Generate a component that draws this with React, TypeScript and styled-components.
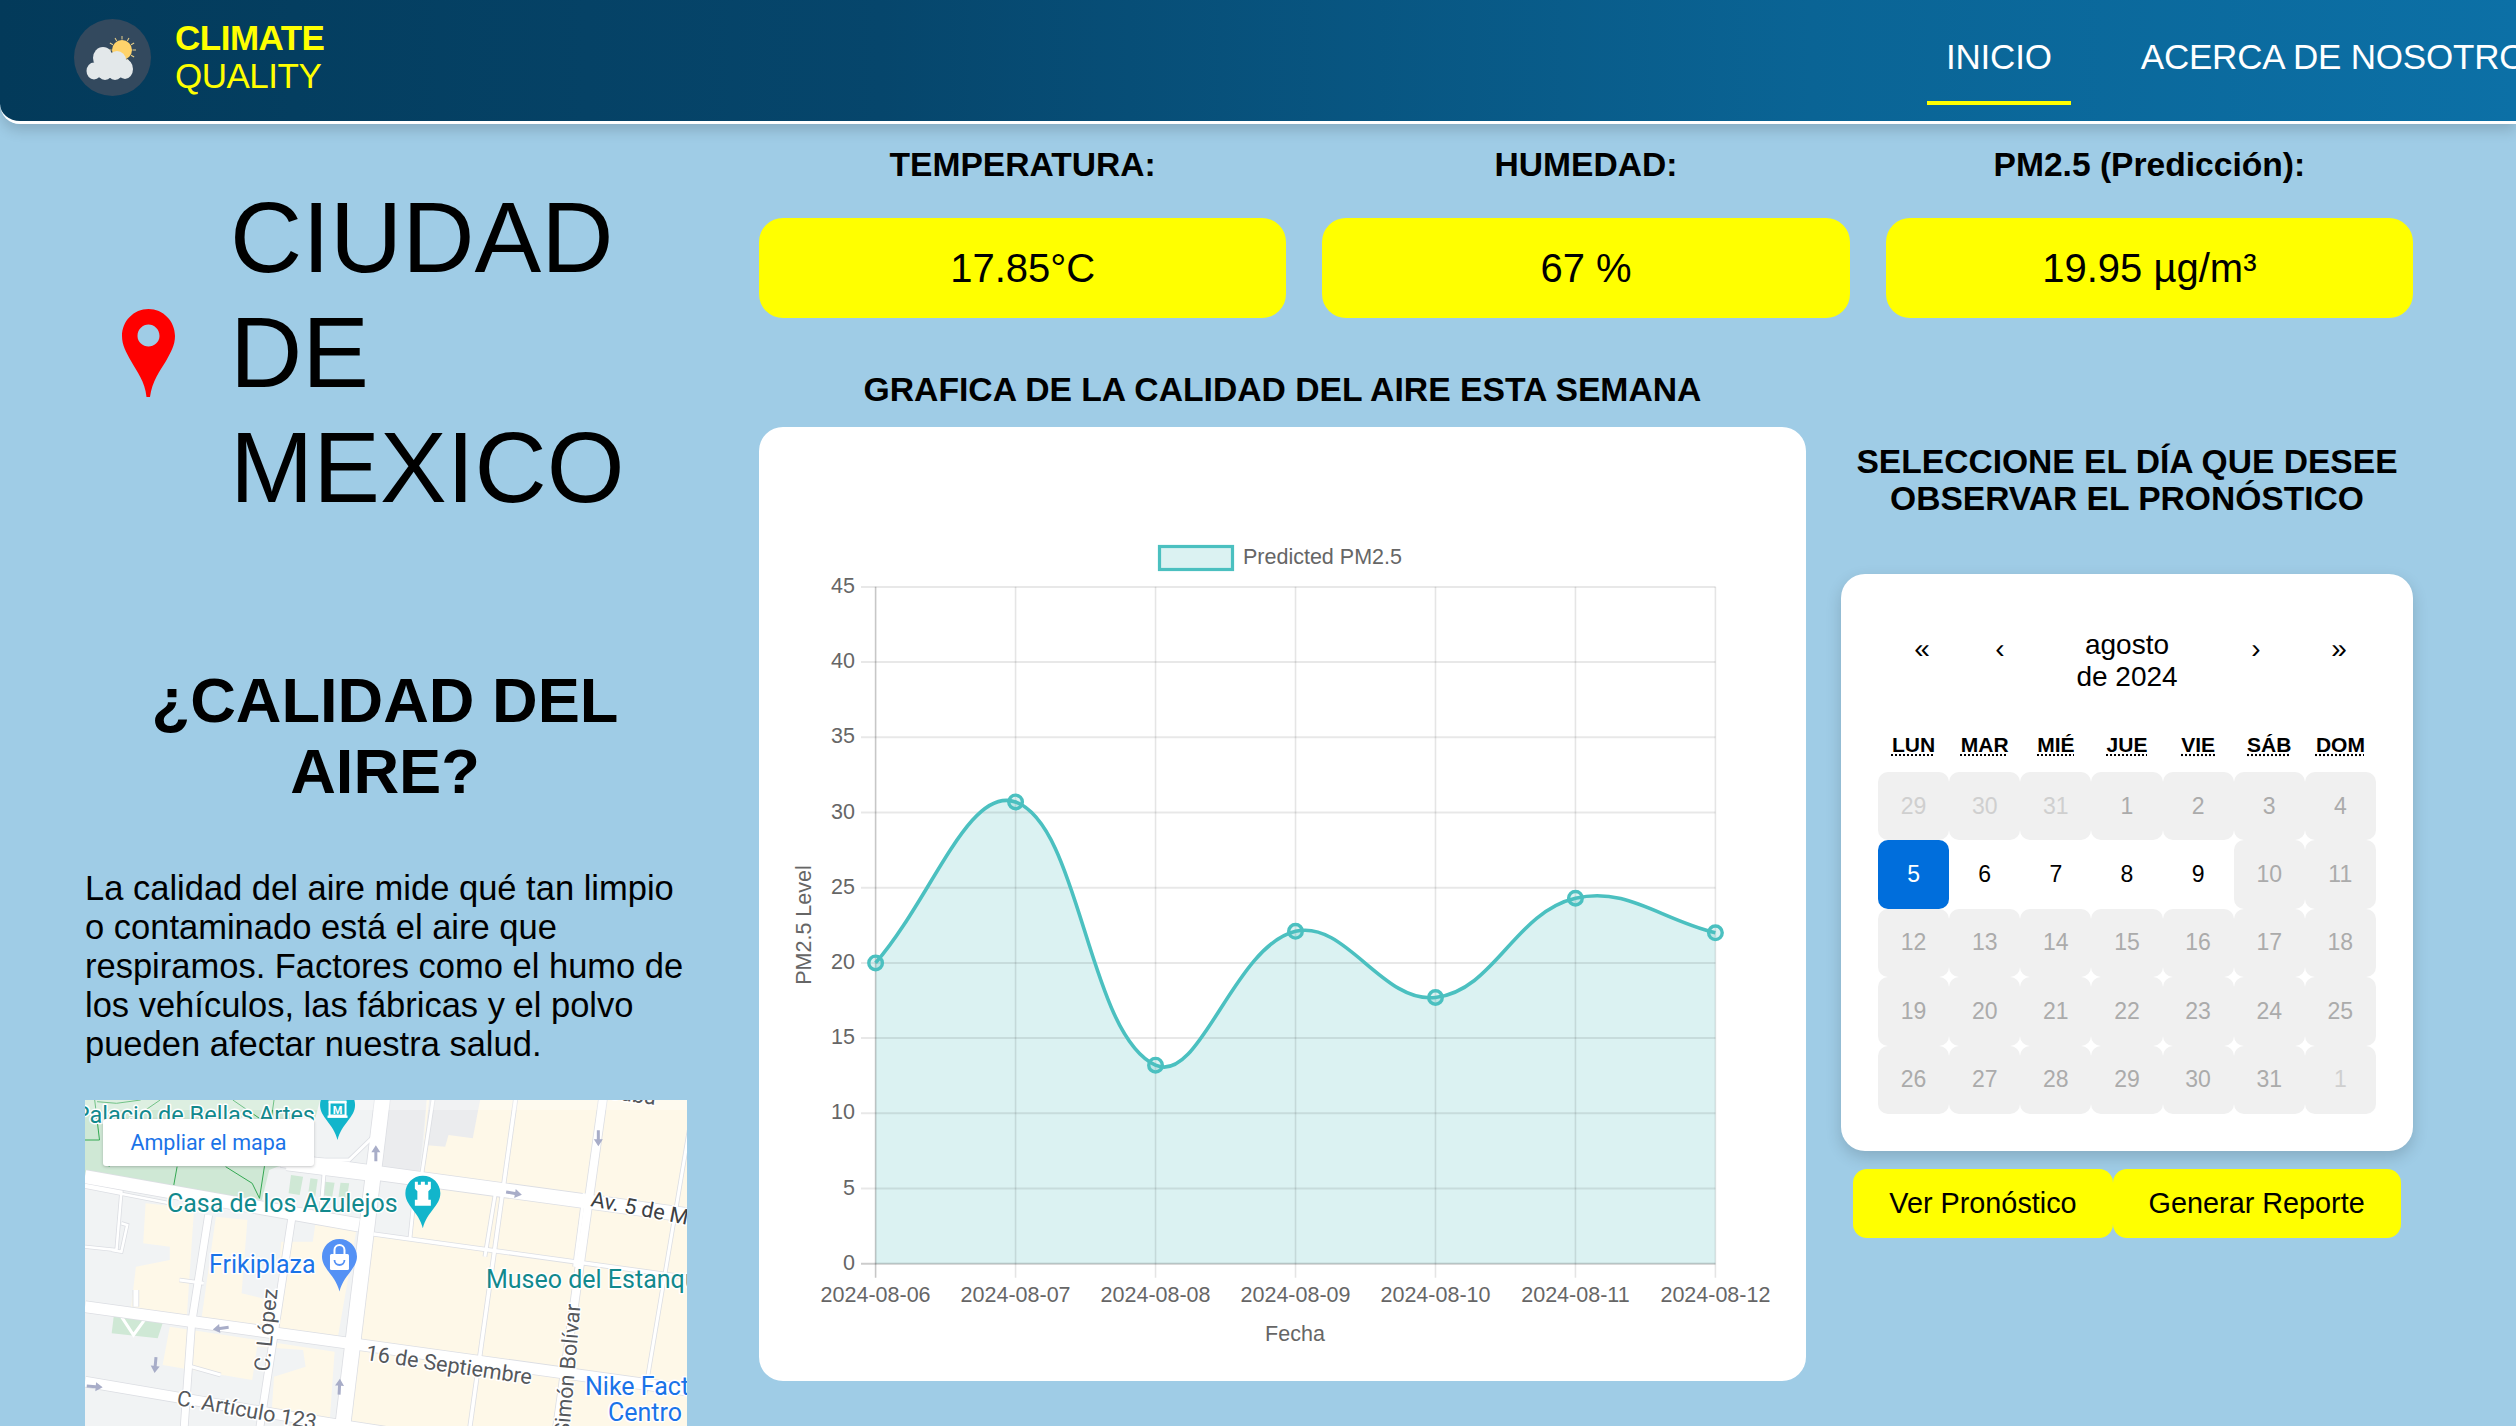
import React from "react";
import styled, { createGlobalStyle } from "styled-components";

const Global = createGlobalStyle`
  html, body { margin: 0; padding: 0; height: 100%; overflow: hidden; background: #9fcce6; }
  body { font-family: "Liberation Sans", Arial, sans-serif; color: #000; }
  #root { height: 100%; }
  * { box-sizing: border-box; }
`;

const Page = styled.div`
  width: 2516px;
  height: 1426px;
  overflow: hidden;
  background: #9fcce6;
`;

const Header = styled.header`
  display: flex;
  align-items: flex-start;
  height: 124px;
  padding-left: 74px;
  background: linear-gradient(90deg, #033a5a 0%, #06466c 35%, #0a6495 72%, #0c70a6 100%);
  border-bottom: 3px solid #fff;
  border-bottom-left-radius: 20px;
  box-shadow: 0 6px 14px rgba(0, 0, 0, 0.16);
  position: relative;
`;

const Brand = styled.div`
  display: flex;
  flex: 0 0 1853px;
  gap: 24px;
  padding-top: 19px;
`;

const LogoDisc = styled.div`
  width: 77px;
  height: 77px;
  border-radius: 50%;
  background: #33495e;
  flex: none;
`;

const BrandText = styled.div`
  color: #ffff00;
  font-size: 35px;
  line-height: 38px;
  letter-spacing: -0.5px;
`;

const BrandStrong = styled.div`
  font-weight: 700;
`;

const Nav = styled.nav`
  display: flex;
  flex: none;
  gap: 51px;
  white-space: nowrap;
`;

const NavLink = styled.a<{ $active?: boolean }>`
  display: block;
  height: 105px;
  padding: 37px 19px 0;
  color: #fff;
  font-size: 35px;
  line-height: 40px;
  letter-spacing: -0.2px;
  border-bottom: 4px solid ${(p) => (p.$active ? "#ffff00" : "transparent")};
`;

const Main = styled.main`
  display: grid;
  grid-template-columns: 759px 1654px;
`;

const LeftCol = styled.section`
  padding: 56px 0 0 85px;
`;

const CityRow = styled.div`
  display: flex;
  align-items: center;
  gap: 55px;
  padding-left: 37px;
`;

const CityName = styled.h1`
  margin: 0;
  width: 420px;
  font-size: 100px;
  font-weight: 400;
  line-height: 115px;
`;

const AirTitle = styled.h2`
  margin: 140px 0 0;
  width: 600px;
  text-align: center;
  font-size: 63.2px;
  line-height: 71px;
  font-weight: 700;
`;

const AirText = styled.p`
  margin: 62px 0 0;
  width: 606px;
  font-size: 34.5px;
  line-height: 39px;
`;

const MapFrame = styled.div`
  position: relative;
  margin-top: 36px;
  width: 602px;
  height: 420px;
  overflow: hidden;
  background: #f1f3f4;
`;

const MapLink = styled.a`
  position: absolute;
  left: 18px;
  top: 19px;
  width: 211px;
  height: 47px;
  display: flex;
  align-items: center;
  justify-content: center;
  background: #fff;
  border-radius: 3px;
  box-shadow: 0 1px 3px rgba(60, 64, 67, 0.3);
  color: #1a73e8;
  font-family: Roboto, sans-serif;
  font-size: 21.5px;
`;

const RightCol = styled.section``;

const Stats = styled.div`
  display: grid;
  grid-template-columns: repeat(3, 1fr);
  column-gap: 36px;
`;

const Stat = styled.div`
  text-align: center;
`;

const StatLabel = styled.div`
  height: 94px;
  padding-top: 21px;
  font-size: 33.6px;
  line-height: 40px;
  font-weight: 700;
`;

const StatValue = styled.div`
  height: 100px;
  display: flex;
  align-items: center;
  justify-content: center;
  background: #ffff00;
  border-radius: 24px;
  font-size: 40px;
`;

const Lower = styled.div`
  display: grid;
  grid-template-columns: 1047px 572px;
  column-gap: 35px;
`;

const ChartCol = styled.div``;

const ChartTitle = styled.h3`
  margin: 50.5px 0 18.5px;
  height: 40px;
  text-align: center;
  font-size: 33.7px;
  line-height: 40px;
  font-weight: 700;
`;

const ChartCard = styled.div`
  height: 954px;
  background: #fff;
  border-radius: 24px;
  overflow: hidden;
`;

const ChartSvg = styled.svg`
  display: block;
  font-family: "Liberation Sans", Arial, sans-serif;
`;

const CalCol = styled.div``;

const CalTitle = styled.h3`
  margin: 125px 0 57px;
  text-align: center;
  font-size: 33.6px;
  line-height: 37px;
  font-weight: 700;
`;

const CalCard = styled.div`
  height: 577px;
  padding: 55px 37px 0;
  background: #fff;
  border-radius: 24px;
  box-shadow: 0 6px 16px rgba(0, 0, 0, 0.16);
`;

const CalNav = styled.div`
  display: grid;
  grid-template-columns: 88px 68px 1fr 72px 94px;
  margin-right: -10px;
  height: 64px;
  align-items: center;
  text-align: center;
  font-size: 28px;
  line-height: 32px;
`;

const CalArrow = styled.span`
  font-size: 28px;
  padding-bottom: 24px;
`;

const WeekHead = styled.div`
  display: grid;
  grid-template-columns: repeat(7, 1fr);
  margin-top: 39px;
  height: 40px;
  text-align: center;
  font-size: 21px;
  line-height: 26px;
  font-weight: 700;
`;

const WeekDay = styled.abbr`
  text-decoration: underline dotted;
  text-underline-offset: 2px;
`;

const Days = styled.div`
  display: grid;
  grid-template-columns: repeat(7, 71.14px);
  grid-auto-rows: 68.4px;
`;

const Day = styled.div<{ $kind: "off" | "faded" | "open" | "sel" }>`
  display: flex;
  align-items: center;
  justify-content: center;
  font-size: 23px;
  border-radius: 10px;
  background: ${(p) => (p.$kind === "sel" ? "#006edc" : p.$kind === "open" ? "#fff" : "#f0f0f0")};
  color: ${(p) => (p.$kind === "sel" ? "#fff" : p.$kind === "open" ? "#000" : p.$kind === "faded" ? "#cfcfcf" : "#ababab")};
`;

const Actions = styled.div`
  display: flex;
  justify-content: center;
  margin-top: 18px;
`;

const Action = styled.button`
  height: 69px;
  padding: 0 36px;
  border: 0;
  border-radius: 14px;
  background: #ffff00;
  color: #000;
  font-family: "Liberation Sans", Arial, sans-serif;
  font-size: 28.8px;
`;

/* ---- chart ---- */
const values = [20, 30.7, 13.2, 22.1, 17.7, 24.3, 22];
const labels = ["2024-08-06", "2024-08-07", "2024-08-08", "2024-08-09", "2024-08-10", "2024-08-11", "2024-08-12"];
const X0 = 875.6;
const XS = 139.97;
const Y0 = 1263.7;
const YU = 15.04;
const pts = values.map((v, i) => ({ x: X0 + i * XS, y: Y0 - v * YU }));

function splinePath() {
  const t = 0.4;
  const ctrl = pts.map((p, i) => {
    const a = pts[Math.max(i - 1, 0)];
    const b = pts[Math.min(i + 1, pts.length - 1)];
    const d1 = Math.hypot(p.x - a.x, p.y - a.y);
    const d2 = Math.hypot(b.x - p.x, b.y - p.y);
    const s = d1 + d2 || 1;
    return {
      px: p.x - (t * d1 / s) * (b.x - a.x),
      py: p.y - (t * d1 / s) * (b.y - a.y),
      nx: p.x + (t * d2 / s) * (b.x - a.x),
      ny: p.y + (t * d2 / s) * (b.y - a.y),
    };
  });
  let d = `M${pts[0].x} ${pts[0].y}`;
  for (let i = 1; i < pts.length; i++) {
    d += ` C${ctrl[i - 1].nx} ${ctrl[i - 1].ny} ${ctrl[i].px} ${ctrl[i].py} ${pts[i].x} ${pts[i].y}`;
  }
  return d;
}

function Chart() {
  const line = splinePath();
  const ticks = [0, 5, 10, 15, 20, 25, 30, 35, 40, 45];
  return (
    <ChartSvg width={1047} height={954} viewBox="759 427 1047 954">
      <path d={`${line} L${pts[6].x} ${Y0} L${pts[0].x} ${Y0} Z`} fill="rgba(75,192,192,0.2)" />
      {ticks.map((t) => (
        <g key={t}>
          <line x1={861} x2={X0 + 6 * XS} y1={Y0 - t * YU} y2={Y0 - t * YU} stroke={t === 0 ? "rgba(0,0,0,0.2)" : "rgba(0,0,0,0.09)"} strokeWidth={2} />
          <text x={855} y={Y0 - t * YU + 6} textAnchor="end" fontSize={21.5} fill="#666">{t}</text>
        </g>
      ))}
      {labels.map((l, i) => (
        <g key={l}>
          <line x1={X0 + i * XS} x2={X0 + i * XS} y1={586.7} y2={1277.7} stroke={i === 0 ? "rgba(0,0,0,0.22)" : "rgba(0,0,0,0.1)"} strokeWidth={1.6} />
          <text x={X0 + i * XS} y={1302} textAnchor="middle" fontSize={21.5} fill="#666">{l}</text>
        </g>
      ))}
      <path d={line} fill="none" stroke="#4bc0c0" strokeWidth={3.6} />
      {pts.map((p) => (
        <circle key={p.x} cx={p.x} cy={p.y} r={6.8} fill="rgba(75,192,192,0.2)" stroke="#4bc0c0" strokeWidth={3.4} />
      ))}
      <rect x={1159.5} y={546.5} width={73} height={23} fill="rgba(75,192,192,0.2)" stroke="#4bc0c0" strokeWidth={3.2} />
      <text x={1243} y={564} fontSize={21.5} fill="#666">Predicted PM2.5</text>
      <text transform="translate(811 925) rotate(-90)" textAnchor="middle" fontSize={21.5} fill="#666">PM2.5 Level</text>
      <text x={1295} y={1341} textAnchor="middle" fontSize={21.5} fill="#666">Fecha</text>
    </ChartSvg>
  );
}

/* ---- map ---- */
const mx = (z: number) => (z - 175) / 2.063;
const my = (z: number) => (z - 120) / 3;
const poly = (a: number[][]) => a.map(([x, y]) => `${mx(x).toFixed(1)},${my(y).toFixed(1)}`).join(" ");

const beige: number[][][] = [
  [[880, 120], [1417, 120], [1417, 1400], [690, 1400], [765, 520], [845, 530], [870, 330]],
  [[300, 430], [400, 445], [385, 770], [270, 745], [280, 620], [350, 600], [350, 560], [295, 550]],
  [[445, 470], [510, 480], [498, 700], [570, 725], [580, 545], [645, 545], [650, 495], [735, 510], [695, 845], [415, 780]],
  [[350, 800], [690, 875], [680, 1080], [560, 1060], [565, 950], [630, 920], [625, 870], [530, 860], [520, 960], [335, 915]],
];
const grey: number[][][] = [
  [[885, 120], [990, 120], [975, 235], [925, 225], [918, 260], [875, 255]],
  [[790, 120], [880, 120], [865, 335], [785, 320]],
];
const roads: [number[][], number][] = [
  [[[175, 350], [740, 495]], 13],
  [[[580, 300], [1417, 465]], 14],
  [[[770, 522], [1417, 652]], 3.5],
  [[[790, 100], [690, 1300]], 15],
  [[[175, 740], [1417, 990]], 11],
  [[[175, 965], [680, 1090], [1000, 1160]], 10],
  [[[602, 470], [515, 1300]], 7],
  [[[1245, 100], [1130, 1300]], 8],
  [[[1065, 100], [950, 1300]], 3.5],
  [[[895, 100], [870, 340]], 3],
  [[[1425, 180], [1330, 1000]], 3],
  [[[430, 465], [395, 790], [370, 1300]], 7],
  [[[855, 400], [845, 540]], 3],
  [[[1025, 370], [1000, 590]], 3],
  [[[1205, 400], [1185, 620]], 3],
  [[[175, 375], [250, 395], [240, 570], [175, 560]], 2.5],
  [[[250, 490], [262, 495], [250, 575], [230, 570]], 2.5],
  [[[175, 380], [350, 430]], 2.5],
  [[[370, 660], [420, 670]], 3],
  [[[280, 740], [280, 690]], 5],
  [[[395, 920], [455, 945]], 3],
  [[[590, 325], [755, 355]], 4],
  [[[670, 310], [660, 480]], 3],
  [[[770, 230], [720, 300], [610, 300]], 3],
];
const arrows: [number, number, number][] = [
  [775, 280, 0], [1234, 235, 180], [1060, 400, 100], [455, 805, 262], [320, 915, 185], [195, 980, 95], [700, 980, 3],
];

const MapSvg = styled.svg`
  display: block;
  font-family: Roboto, sans-serif;
`;

const Halo = styled.text`
  paint-order: stroke;
  stroke: #fff;
  stroke-width: 3px;
  stroke-linejoin: round;
`;

const PIN = "M0 0C-9.7 0-17.5 7.8-17.5 17.5C-17.5 30-4 36 0 52.5C4 36 17.5 30 17.5 17.5C17.5 7.8 9.7 0 0 0Z";

function MapArt() {
  return (
    <MapSvg width={602} height={420} viewBox="0 0 602 420">
      <rect width={602} height={420} fill="#f1f3f4" />
      <polygon points={poly([[175, 120], [660, 120], [640, 230], [590, 310], [555, 330], [540, 420], [175, 345]])} fill="#cfe8d5" />
      <g fill="none" stroke="#34a853" strokeWidth={1}>
        <polyline points={poly([[175, 240], [205, 240], [195, 120]])} />
        <polyline points={poly([[225, 320], [215, 235], [330, 120]])} />
        <polyline points={poly([[365, 320], [355, 400]])} />
        <polyline points={poly([[465, 320], [520, 370], [535, 415], [545, 320], [565, 120]])} />
        <polyline points={poly([[480, 120], [540, 180]])} />
        <polyline points={poly([[200, 125], [240, 130], [290, 120]])} />
      </g>
      {grey.map((g, i) => <polygon key={i} points={poly(g)} fill="#ebecee" />)}
      {beige.map((g, i) => <polygon key={i} points={poly(g)} fill="#fef8e8" />)}
      {grey.slice(0, 1).map((g, i) => <polygon key={i} points={poly(g)} fill="#ebecee" />)}
      <polygon points={poly([[235, 760], [335, 790], [325, 835], [230, 820]])} fill="#cfe8d5" />
      <polyline points={poly([[250, 770], [275, 825], [300, 775]])} fill="none" stroke="#fff" strokeWidth={3} />
      <polygon points={poly([[600, 345], [625, 350], [618, 405], [595, 400]])} fill="#cfe8d5" />
      <polygon points={poly([[640, 355], [655, 358], [650, 410], [635, 405]])} fill="#cfe8d5" />
      <polygon points={poly([[670, 365], [690, 368], [685, 410], [665, 405]])} fill="#cfe8d5" />
      <polygon points={poly([[702, 368], [720, 370], [715, 415], [698, 410]])} fill="#cfe8d5" />
      {roads.map(([r, w], i) => (
        <polyline key={`e${i}`} points={poly(r)} fill="none" stroke="#dcdee3" strokeWidth={w + 1.6} />
      ))}
      {roads.map(([r, w], i) => (
        <polyline key={`r${i}`} points={poly(r)} fill="none" stroke="#fff" strokeWidth={w} />
      ))}
      {arrows.map(([x, y, a], i) => (
        <path key={i} transform={`translate(${mx(x)} ${my(y)}) rotate(${a})`} d="M0-8L4.5-1H1.5V8H-1.5V-1H-4.5Z" fill="#a8adc8" />
      ))}
      <rect width={602} height={10} fill="rgba(255,255,255,0.3)" />

      <g transform={`translate(${mx(696)} -12.5)`}>
        <path d={PIN} fill="#12b5cb" />
        <rect x={-9} y={13} width={18} height={2.4} fill="#fff" />
        <rect x={-10} y={28} width={20} height={2.4} fill="#fff" />
        <rect x={-8} y={15} width={16} height={13} fill="none" stroke="#fff" strokeWidth={2} />
        <text x={0} y={26} textAnchor="middle" fontSize={11} fontWeight={700} fill="#fff">M</text>
      </g>

      <g transform={`translate(${mx(872)} ${my(347)})`}>
        <path d={PIN} fill="#12b5cb" />
        <path d="M-8 6H-5V9H-2V6H2V9H5V6H8V13L5.5 15.5V24H8V30H-8V24H-5.5V15.5L-8 13Z" fill="#fff" />
      </g>

      <g transform={`translate(${mx(700)} ${my(537)})`}>
        <path d={PIN} fill="#5491f5" />
        <rect x={-9.5} y={15} width={19} height={16} rx={1.5} fill="#fff" />
        <path d="M-5 15V11A5 5 0 0 1 5 11V15" fill="none" stroke="#fff" strokeWidth={2} />
        <path d="M-5 21A5 5 0 0 0 5 21" fill="none" stroke="#5491f5" strokeWidth={1.8} />
      </g>

      <Halo x={230} y={23} textAnchor="end" fontSize={23.5} fill="#12898d">Palacio de Bellas Artes</Halo>
      <Halo x={82} y={112} fontSize={25} fill="#12898d">Casa de los Azulejos</Halo>
      <Halo x={124} y={173} fontSize={25} fill="#1a73e8">Frikiplaza</Halo>
      <Halo x={401} y={188} fontSize={25} fill="#12898d">Museo del Estanquillo</Halo>
      <Halo x={500} y={295} fontSize={25} fill="#1a73e8">Nike Factory</Halo>
      <Halo x={597} y={321} textAnchor="end" fontSize={25} fill="#1a73e8">Centro</Halo>
      <Halo transform="translate(505 106) rotate(11)" fontSize={21.5} fill="#3c4043">Av. 5 de Mayo</Halo>
      <Halo transform="translate(280 260) rotate(8.4)" fontSize={21.5} fill="#55585c">16 de Septiembre</Halo>
      <Halo transform="translate(184 272) rotate(-84)" fontSize={21.5} fill="#55585c">C. López</Halo>
      <Halo transform="translate(484 336) rotate(-85)" fontSize={21.5} fill="#55585c">Simón Bolívar</Halo>
      <Halo transform="translate(91 305) rotate(10)" fontSize={21.5} fill="#55585c">C. Artículo 123</Halo>
      <Halo transform="translate(570 5) rotate(8)" textAnchor="end" fontSize={21.5} fill="#55585c">Tacuba</Halo>
    </MapSvg>
  );
}

const weekDays = ["LUN", "MAR", "MIÉ", "JUE", "VIE", "SÁB", "DOM"];
type Cell = { n: number; k: "off" | "faded" | "open" | "sel" };
const cells: Cell[] = [
  ...[29, 30, 31].map((n) => ({ n, k: "faded" as const })),
  ...[1, 2, 3, 4].map((n) => ({ n, k: "off" as const })),
  { n: 5, k: "sel" },
  ...[6, 7, 8, 9].map((n) => ({ n, k: "open" as const })),
  ...Array.from({ length: 22 }, (_, i) => ({ n: i + 10, k: "off" as const })),
  { n: 1, k: "faded" },
];

export default function App() {
  return (
    <Page>
      <Global />
      <Header>
        <Brand>
          <LogoDisc>
            <svg width={77} height={77} viewBox="0 0 77 77">
              <g stroke="#e9d08a" strokeWidth={1}>
                {Array.from({ length: 12 }, (_, i) => (
                  <line key={i} x1={48} y1={17} x2={48} y2={20.5} transform={`rotate(${i * 30 - 60} 48 31)`} />
                ))}
              </g>
              <circle cx={48} cy={31} r={10} fill="#ffd36b" />
              <g fill="#e3e8ea">
                <ellipse cx={29} cy={39} rx={10} ry={11} />
                <ellipse cx={43} cy={41} rx={9} ry={9} />
                <ellipse cx={20} cy={52} rx={7.5} ry={8.5} />
                <ellipse cx={31} cy={52} rx={8} ry={9} />
                <ellipse cx={41} cy={52} rx={8} ry={9} />
                <ellipse cx={51} cy={50} rx={8} ry={10} />
              </g>
            </svg>
          </LogoDisc>
          <BrandText>
            <BrandStrong>CLIMATE</BrandStrong>
            QUALITY
          </BrandText>
        </Brand>
        <Nav>
          <NavLink $active>INICIO</NavLink>
          <NavLink>ACERCA DE NOSOTROS</NavLink>
        </Nav>
      </Header>
      <Main>
        <LeftCol>
          <CityRow>
            <svg width={53} height={88} viewBox="0 0 53 88">
              <path
                fillRule="evenodd"
                fill="#ff0000"
                d="M26.5 0C11.8 0 0 12 0 27C0 36 4 43 9 52C15 63 23 72 24.5 88H28C30 72 38 62 44 52C49 43 53 36 53 27C53 12 41 0 26.5 0ZM26.5 15.5C32 15.5 37.5 20 37.5 27C37.5 33 32 37.5 26.5 37.5C21 37.5 15.5 33 15.5 27C15.5 20 21 15.5 26.5 15.5Z"
              />
            </svg>
            <CityName>CIUDAD DE MEXICO</CityName>
          </CityRow>
          <AirTitle>¿CALIDAD DEL AIRE?</AirTitle>
          <AirText>
            La calidad del aire mide qué tan limpio o contaminado está el aire que respiramos. Factores como el humo de los vehículos, las fábricas y el polvo pueden afectar nuestra salud.
          </AirText>
          <MapFrame>
            <MapArt />
            <MapLink>Ampliar el mapa</MapLink>
          </MapFrame>
        </LeftCol>
        <RightCol>
          <Stats>
            <Stat><StatLabel>TEMPERATURA:</StatLabel><StatValue>17.85°C</StatValue></Stat>
            <Stat><StatLabel>HUMEDAD:</StatLabel><StatValue>67 %</StatValue></Stat>
            <Stat><StatLabel>PM2.5 (Predicción):</StatLabel><StatValue>19.95 µg/m³</StatValue></Stat>
          </Stats>
          <Lower>
            <ChartCol>
              <ChartTitle>GRAFICA DE LA CALIDAD DEL AIRE ESTA SEMANA</ChartTitle>
              <ChartCard><Chart /></ChartCard>
            </ChartCol>
            <CalCol>
              <CalTitle>SELECCIONE EL DÍA QUE DESEE<br />OBSERVAR EL PRONÓSTICO</CalTitle>
              <CalCard>
                <CalNav>
                  <CalArrow>«</CalArrow>
                  <CalArrow>‹</CalArrow>
                  <span>agosto<br />de 2024</span>
                  <CalArrow>›</CalArrow>
                  <CalArrow>»</CalArrow>
                </CalNav>
                <WeekHead>
                  {weekDays.map((d) => <span key={d}><WeekDay>{d}</WeekDay></span>)}
                </WeekHead>
                <Days>
                  {cells.map((c, i) => <Day key={i} $kind={c.k}>{c.n}</Day>)}
                </Days>
              </CalCard>
              <Actions>
                <Action>Ver Pronóstico</Action>
                <Action>Generar Reporte</Action>
              </Actions>
            </CalCol>
          </Lower>
        </RightCol>
      </Main>
    </Page>
  );
}
